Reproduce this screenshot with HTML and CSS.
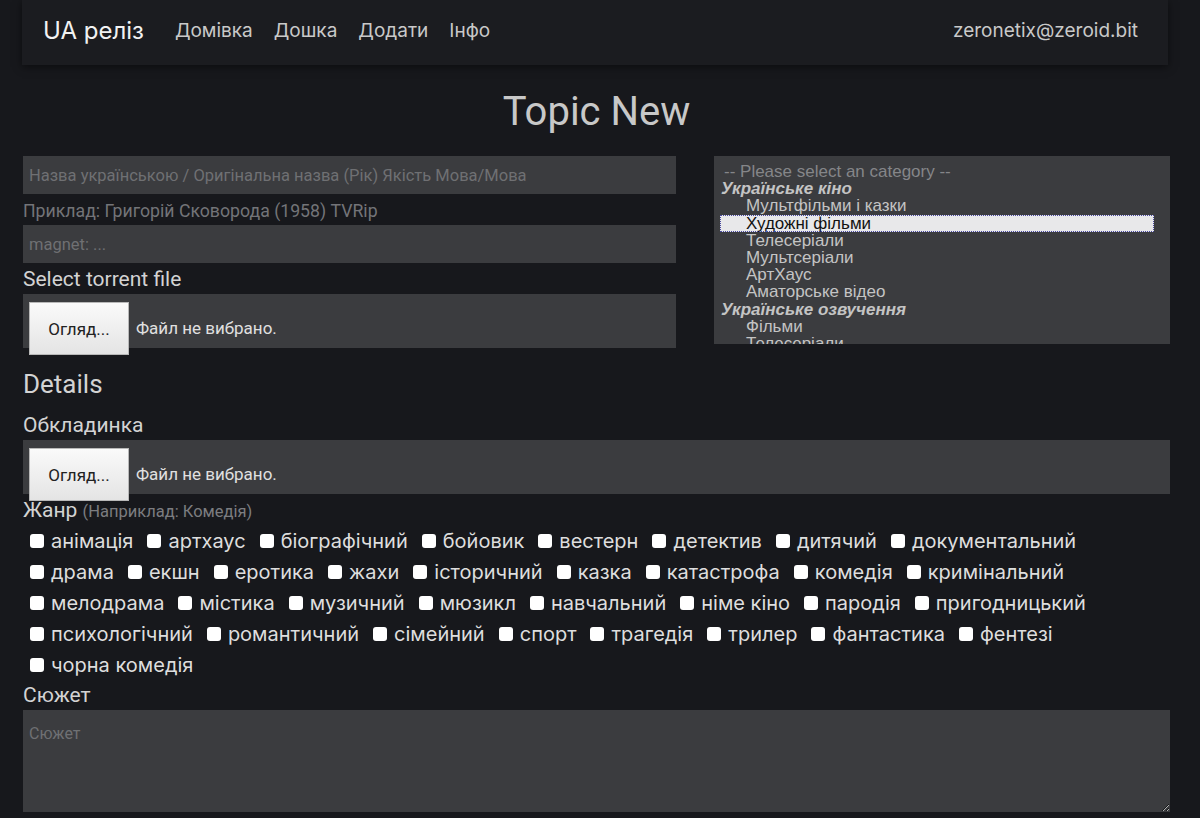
FILE: index.html
```html
<!DOCTYPE html>
<html lang="uk">
<head>
    <meta charset="UTF-8">
    <meta name="viewport" content="width=device-width, initial-scale=1.0">
    <title>Topic New</title>
    <link rel="stylesheet" href="styles.css">
</head>
<body>
    <nav class="navbar">
        <a class="brand" href="#">UA реліз</a>
        <div class="nav-links">
            <a href="#">Домівка</a>
            <a href="#">Дошка</a>
            <a href="#">Додати</a>
            <a href="#">Інфо</a>
        </div>
        <span class="user">zeronetix@zeroid.bit</span>
    </nav>

    <div class="container">
        <h1 class="page-title">Topic New</h1>

        <div class="top-row">
            <div class="left-col">
                <input class="field" type="text" placeholder="Назва українською / Оригінальна назва (Рік) Якість Мова/Мова">
                <div class="hint">Приклад: Григорій Сковорода (1958) TVRip</div>
                <input class="field" type="text" placeholder="magnet: ...">
                <div class="label">Select torrent file</div>
                <div class="file-box">
                    <button class="file-btn">Огляд...</button>
                    <span class="file-name">Файл не вибрано.</span>
                </div>
            </div>

            <div class="cat-list">
                <div class="cat-placeholder">-- Please select an category --</div>
                <div class="cat-group">Українське кіно</div>
                <div class="cat-option">Мультфільми і казки</div>
                <div class="cat-option selected">Художні фільми</div>
                <div class="cat-option">Телесеріали</div>
                <div class="cat-option">Мультсеріали</div>
                <div class="cat-option">АртХаус</div>
                <div class="cat-option">Аматорське відео</div>
                <div class="cat-group">Українське озвучення</div>
                <div class="cat-option">Фільми</div>
                <div class="cat-option">Телесеріали</div>
                <div class="cat-option">Мультфільми</div>
            </div>
        </div>

        <h2 class="section-title">Details</h2>

        <div class="label">Обкладинка</div>
        <div class="file-box">
            <button class="file-btn">Огляд...</button>
            <span class="file-name">Файл не вибрано.</span>
        </div>

        <div class="label genre-label">Жанр <small>(Наприклад: Комедія)</small></div>
        <div class="genres" id="genres"></div>

        <div class="label">Сюжет</div>
        <textarea class="plot" placeholder="Сюжет"></textarea>
    </div>

    <script>
        const genres = ['анімація', 'артхаус', 'біографічний', 'бойовик', 'вестерн', 'детектив', 'дитячий', 'документальний',
            'драма', 'екшн', 'еротика', 'жахи', 'історичний', 'казка', 'катастрофа', 'комедія', 'кримінальний',
            'мелодрама', 'містика', 'музичний', 'мюзикл', 'навчальний', 'німе кіно', 'пародія', 'пригодницький',
            'психологічний', 'романтичний', 'сімейний', 'спорт', 'трагедія', 'трилер', 'фантастика', 'фентезі',
            'чорна комедія'];

        const box = document.getElementById('genres');
        genres.forEach(name => {
            const label = document.createElement('label');
            label.className = 'genre';
            label.innerHTML = `<input type="checkbox"> ${name}`;
            box.appendChild(label);
        });
    </script>
</body>
</html>
```

FILE: styles.css
```css
body {
    margin: 0;
    background-color: #17181c;
    color: #d6d6d6;
    font-family: Roboto, "Noto Sans", sans-serif;
}
a {
    color: inherit;
    text-decoration: none;
}
.navbar {
    display: flex;
    align-items: center;
    height: 65px;
    width: 1146px;
    margin-left: 22px;
    box-sizing: border-box;
    padding: 0 30px 4px 21px;
    background-color: #1b1c20;
    box-shadow: 0 2px 8px rgba(0,0,0,0.5);
    font-family: Inter, Roboto, sans-serif;
}
.brand {
    font-size: 24px;
    color: #f2f2f2;
    margin-right: 31px;
}
.nav-links {
    display: flex;
    gap: 21px;
    font-size: 19px;
    color: #c9c9c9;
}
.user {
    margin-left: auto;
    font-size: 19px;
    color: #c9c9c9;
}
.container {
    width: 1147px;
    margin-left: 23px;
}
.page-title {
    margin: 25px 0 22px;
    text-align: center;
    font-size: 40px;
    font-weight: 400;
    color: #c8c8c8;
    line-height: 44px;
}
.top-row {
    display: grid;
    grid-template-columns: 653px 456px;
    gap: 38px;
    align-items: start;
}
.left-col {
    display: flex;
    flex-direction: column;
}
.field {
    display: block;
    height: 38px;
    box-sizing: border-box;
    width: 100%;
    border: none;
    padding: 0 6px;
    background-color: #3b3c3f;
    color: #ddd;
    font-family: Roboto, sans-serif;
    font-size: 16.5px;
    outline: none;
}
.field::placeholder { color: #6f7073; }
.hint {
    font-size: 17.7px;
    color: #737478;
    margin: 8px 0 4px;
    line-height: 19px;
}
.label {
    font-size: 21px;
    color: #d3d3d3;
    line-height: 26px;
    margin-top: 3px;
    margin-bottom: 2px;
}
.file-box {
    display: flex;
    align-items: flex-start;
    height: 54px;
    background-color: #3b3c3f;
    padding: 8px 6px 0;
    box-sizing: border-box;
}
.file-btn {
    width: 100px;
    height: 53px;
    flex-shrink: 0;
    border: 1px solid #b8b8b8;
    background: linear-gradient(#fafafa, #e4e4e4);
    color: #222;
    font-family: Roboto, sans-serif;
    font-size: 17px;
}
.file-name {
    margin: 16px 0 0 7px;
    font-size: 17px;
    color: #e0e0e0;
}
.cat-list {
    height: 188px;
    overflow: hidden;
    background-color: #3b3c3f;
    padding: 7px 16px 0 6px;
    box-sizing: border-box;
    font-family: "Liberation Sans", Arial, sans-serif;
    font-size: 17px;
    line-height: 17.2px;
    color: #c4c4c4;
}
.cat-placeholder {
    color: #858689;
    padding-left: 4px;
}
.cat-group {
    font-weight: bold;
    font-style: italic;
    padding-left: 1px;
}
.cat-option {
    padding-left: 26px;
}
.cat-option.selected {
    background-color: #e8e8ea;
    color: #111;
    outline: 1px dotted #4a4aa0;
    outline-offset: -1px;
}
.section-title {
    margin: 21px 0 13px;
    font-size: 26px;
    font-weight: 400;
    color: #d3d3d3;
    line-height: 30px;
}
.genre-label {
    margin-top: 3px;
    margin-bottom: 1px;
}
.genre-label small {
    font-size: 16.5px;
    color: #7c7d80;
}
.genres {
    display: flex;
    flex-wrap: wrap;
    column-gap: 14px;
    padding-left: 7px;
    margin-bottom: -1px;
}
.genre {
    display: flex;
    align-items: center;
    gap: 7px;
    height: 30.8px;
    font-family: Inter, Roboto, sans-serif;
    font-size: 20px;
    color: #dedede;
}
.genre input {
    appearance: none;
    width: 14px;
    height: 14px;
    margin: 0;
    background-color: #fff;
    border-radius: 3px;
}
.plot {
    display: block;
    width: 100%;
    height: 102px;
    box-sizing: border-box;
    border: none;
    padding: 14px 6px;
    background-color: #3b3c3f;
    color: #ddd;
    font-family: Roboto, sans-serif;
    font-size: 16px;
}
.plot::placeholder { color: #6f7073; }
```
